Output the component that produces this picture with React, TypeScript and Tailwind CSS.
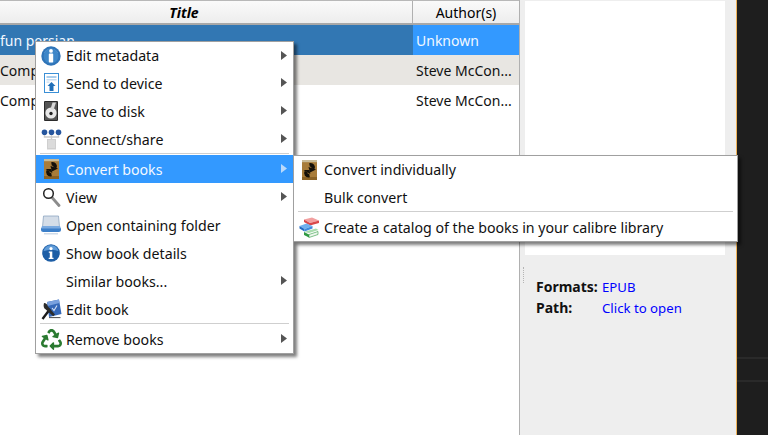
import React from "react";
import { FaRecycle } from "react-icons/fa";

const font = "font-['Noto_Sans',sans-serif]";

function InfoBig() {
  return (
    <svg width="20" height="20" viewBox="0 0 20 20">
      <circle cx="10" cy="10" r="9.7" fill="#2f74b8" />
      <path d="M3 7a8 8 0 0 1 14 0z" fill="#6ea5d8" />
      <circle cx="10" cy="10" r="7.4" fill="#3d86c8" />
      <circle cx="10" cy="4.9" r="1.9" fill="#fff" />
      <rect x="7.8" y="7.6" width="4.4" height="9" rx="0.8" fill="#fff" />
    </svg>
  );
}
function Send() {
  return (
    <svg width="15" height="20" viewBox="0 0 15 20">
      <rect x="0.5" y="0.5" width="14" height="19" fill="#fff" stroke="#3a8fd6" />
      <rect x="2.5" y="3" width="10" height="2" fill="#a9cdec" />
      <rect x="2.5" y="6" width="10" height="1.5" fill="#c5dcf1" />
      <rect x="2.5" y="8.5" width="3" height="1.2" fill="#c5dcf1" />
      <path d="M7.5 9 L11.5 13 H9.5 V18 H5.5 V13 H3.500z" fill="#1f6fb8" />
    </svg>
  );
}
function Disk() {
  return (
    <svg width="14" height="20" viewBox="0 0 14 20">
      <rect x="0" y="0" width="14" height="20" rx="1" fill="#2a2a2a" />
      <rect x="1" y="1" width="12" height="18" fill="#555" />
      <circle cx="7" cy="12" r="5.6" fill="#e8e8e8" />
      <path d="M8.500 1.500h3.500L9.500 9 6.500 8z" fill="#d8d8d8" />
      <circle cx="7" cy="12.500" r="1.700" fill="#222" />
    </svg>
  );
}
function Connect() {
  return (
    <svg width="21" height="21" viewBox="0 0 21 21">
      <path d="M3.5 5v3h14V5M10.5 5v5" stroke="#c9c9c9" strokeWidth="1.4" fill="none" />
      <circle cx="3.5" cy="3.2" r="2.8" fill="#26569e" />
      <circle cx="10.5" cy="3.2" r="2.8" fill="#26569e" />
      <circle cx="17.5" cy="3.2" r="2.8" fill="#26569e" />
      <rect x="6" y="10" width="9" height="10.5" fill="#cfcfcf" />
      <path d="M7 12h7M7 14h7M7 16h7M7 18h7" stroke="#ededed" strokeWidth="0.8" />
    </svg>
  );
}
function Convert() {
  return (
    <svg width="15" height="20" viewBox="0 0 15 20">
      <rect width="15" height="20" fill="#a87c3a" />
      <rect width="15" height="2.200" fill="#c9bb98" />
      <rect y="17" width="15" height="3" fill="#8a6226" />
      <path d="M7.500 5c3-.6 4.500 1.600 3.200 3.800" stroke="#14100a" strokeWidth="3.600" fill="none" />
      <path d="M6.500 7l7.500 2.500-6 3z" fill="#14100a" />
      <path d="M7.500 15.500c-3 .6-4.500-1.600-3.200-3.800" stroke="#14100a" strokeWidth="3.600" fill="none" />
      <path d="M1.500 10l6 0 .8 4z" fill="#14100a" />
    </svg>
  );
}
function Magnifier() {
  return (
    <svg width="19" height="20" viewBox="0 0 19 20">
      <path d="M10 10.500 L17 18.500" stroke="#8c8c8c" strokeWidth="2.800" strokeLinecap="round" />
      <circle cx="6.500" cy="6.500" r="4.800" fill="#fff" stroke="#222" strokeWidth="1.500" />
    </svg>
  );
}
function Folder() {
  return (
    <svg width="22" height="21" viewBox="0 0 22 21">
      <path d="M3.500 1h15l1 11h-17z" fill="#d4dde8" stroke="#8ea6c2" strokeWidth="0.8" />
      <path d="M1 13h20v1.800c0 1.400-1 2.200-2.200 2.200H3.200C2 17 1 16.200 1 14.800z" fill="#3c7fc9" />
      <path d="M2 11h18l1 2.500H1z" fill="#7aaae0" />
      <rect x="4" y="18" width="14" height="1.500" fill="#cfdbe9" />
    </svg>
  );
}
function InfoSmall() {
  return (
    <svg width="18" height="18" viewBox="0 0 18 18">
      <circle cx="9" cy="9" r="8.800" fill="#1d5ea6" />
      <path d="M1.500 7a7.800 7.800 0 0 1 15 0c-3-1.500-11-1.500-15 0z" fill="#5f9bd8" />
      <circle cx="9" cy="4.600" r="1.600" fill="#fff" />
      <path d="M6.800 7.500h3.500v6.200h1.200v1.300H6.700v-1.300h1.100V8.800h-1z" fill="#fff" />
    </svg>
  );
}
function EditBook() {
  return (
    <svg width="21" height="21" viewBox="0 0 21 21">
      <path d="M6 3 L18 0.500 L20.500 15 L8 18z" fill="#3568b8" />
      <path d="M6 3 L18 0.500 L18.500 4 L6.500 7z" fill="#7aa1de" />
      <path d="M11 9l2 2.500 3-5" stroke="#d6e2f4" strokeWidth="1.100" fill="none" />
      <path d="M1.500 20 L9 10" stroke="#1a1a1a" strokeWidth="2.400" />
      <path d="M3 4c2 0 3.500 1.500 4 3.500l7 8-1.800 1.800-7.700-7C3 9.500 2 7 3 4z" fill="#2c2c2c" />
      <path d="M8 18.200h11.500v.9H8z" fill="#333" />
    </svg>
  );
}
function Books() {
  return (
    <svg width="21" height="21" viewBox="0 0 21 21">
      <path d="M5 2.500 13 0.500l7 3-9 2.500z" fill="#f2a0a0" />
      <path d="M5 2.500l6 3.500 9-2.500v2.500l-9 2.500-6-3.500z" fill="#d9484a" />
      <path d="M0.500 9l7-2.500 6 2.500-8 3z" fill="#6fb0ee" />
      <path d="M0.500 9l5 3v2.500l-5-3z" fill="#1f69c4" />
      <path d="M5.500 12l8-3v2.500l-8 3z" fill="#3f8bdc" />
      <path d="M5 15l3-1 9-2.500 2.500 1.500-9.500 3z" fill="#a9dcae" />
      <path d="M5 15l5 2.500v3L5 18z" fill="#2f9a42" />
      <path d="M10 17.500l9-3v3l-9 3z" fill="#eef7ee" stroke="#2f9a42" strokeWidth="0.600" />
    </svg>
  );
}

function Arrow({ light }: { light?: boolean }) {
  return (
    <svg width="6" height="9" viewBox="0 0 6 9" className="absolute right-[6px] top-[9px]">
      <path d="M0 0 L6 4.500 L0 9z" fill={light ? "#b9d9fb" : "#555555"} />
    </svg>
  );
}

type It = { label?: string; icon?: React.ReactNode; sub?: boolean; active?: boolean; sep?: boolean };

function Menu({ items, className }: { items: It[]; className: string }) {
  return (
    <div className={`absolute bg-white border border-[#a0a0a0] shadow-[3px_3px_3px_rgba(0,0,0,0.5)] ${className}`}>
      {items.map((it, i) =>
        it.sep ? (
          <div key={i} className="h-[2px] mx-[4px] bg-[#cfcfcf] border-b border-white" />
        ) : (
          <div
            key={i}
            className={`relative flex items-center ${i === 0 ? "h-[27px]" : "h-[28px]"} text-[14.2px] ${it.active ? "bg-[#3399ff] text-[#f2f8ff]" : "text-[#111]"}`}
          >
            <div className="w-[30px] h-full flex items-center justify-center shrink-0">{it.icon}</div>
            <span className={`whitespace-nowrap ${i === 0 ? "" : "mt-[2px]"}`}>{it.label}</span>
            {it.sub && <Arrow light={it.active} />}
          </div>
        )
      )}
    </div>
  );
}

const main: It[] = [
  { label: "Edit metadata", icon: <InfoBig />, sub: true },
  { label: "Send to device", icon: <Send />, sub: true },
  { label: "Save to disk", icon: <Disk />, sub: true },
  { label: "Connect/share", icon: <Connect />, sub: true },
  { sep: true },
  { label: "Convert books", icon: <Convert />, sub: true, active: true },
  { label: "View", icon: <Magnifier />, sub: true },
  { label: "Open containing folder", icon: <Folder /> },
  { label: "Show book details", icon: <InfoSmall /> },
  { label: "Similar books...", sub: true },
  { label: "Edit book", icon: <EditBook /> },
  { sep: true },
  { label: "Remove books", icon: <FaRecycle size={21} color="#2a7a30" />, sub: true },
];

const sub: It[] = [
  { label: "Convert individually", icon: <Convert /> },
  { label: "Bulk convert" },
  { sep: true },
  { label: "Create a catalog of the books in your calibre library", icon: <Books /> },
];

function Row({ bg, authorBg, color, title, author }: { bg: string; authorBg: string; color: string; title: string; author: string }) {
  return (
    <div className={`flex h-[30px] items-center text-[14px] ${color}`}>
      <div className={`w-[413px] h-full flex items-center ${bg} whitespace-nowrap overflow-hidden`}>{title}</div>
      <div className={`flex-1 h-full flex items-center pl-[3px] ${authorBg} whitespace-nowrap`}>{author}</div>
    </div>
  );
}

export default function App() {
  return (
    <div className={`relative flex w-[768px] h-[435px] overflow-hidden bg-[#1e1e1e] ${font}`}>
      <div className="w-[519px] h-full bg-white shrink-0">
        <div className="flex h-[25px] border-t border-[#b8b8b8] border-b-2 border-b-[#a8a8a8] bg-gradient-to-b from-[#fafafa] to-[#ededed] text-[14px] text-black">
          <div className="w-[413px] flex items-center justify-center font-bold italic border-r border-[#b0b0b0]">
            <span className="-ml-[44px]">Title</span>
          </div>
          <div className="flex-1 flex items-center justify-center">Author(s)</div>
        </div>
        <Row bg="bg-[#3277b3]" authorBg="bg-[#3399ff]" color="text-[#f2f8ff]" title="fun persian" author="Unknown" />
        <Row bg="bg-[#e8e6e2]" authorBg="bg-[#e8e6e2]" color="text-[#111]" title="Complete" author="Steve McCon..." />
        <Row bg="bg-white" authorBg="bg-white" color="text-[#111]" title="Complete" author="Steve McCon..." />
      </div>

      <div className="relative w-[218px] h-full bg-[#eeeeee] border-l border-[#b0b0b0] border-r border-r-[#f0b45a] shrink-0 pt-[1px] pl-[5px]">
        <div className="w-[200px] h-[254px] bg-white" />
        <div className="grid grid-cols-[66px_auto] gap-y-[3px] pl-[11px] pt-[23px] text-[14px] leading-[18px]">
          <span className="font-bold text-[#111]">Formats:</span>
          <span className="text-[#0000ff] text-[13.2px]">EPUB</span>
          <span className="font-bold text-[#111]">Path:</span>
          <span className="text-[#0000ff] text-[13.2px]">Click to open</span>
        </div>
        <div className="absolute left-[3px] top-[267px] h-[16px] border-l border-dotted border-[#b4b4b4]" />
      </div>

      <div className="flex-1 h-full pt-[357px]">
        <div className="h-[2px] bg-[#2a2a2a]" />
        <div className="h-[21px]" />
        <div className="h-[2px] bg-[#2a2a2a]" />
      </div>

      <Menu items={main} className="left-[35px] top-[41px] w-[259px]" />
      <Menu items={sub} className="left-[293px] top-[155px] w-[445px]" />
    </div>
  );
}
